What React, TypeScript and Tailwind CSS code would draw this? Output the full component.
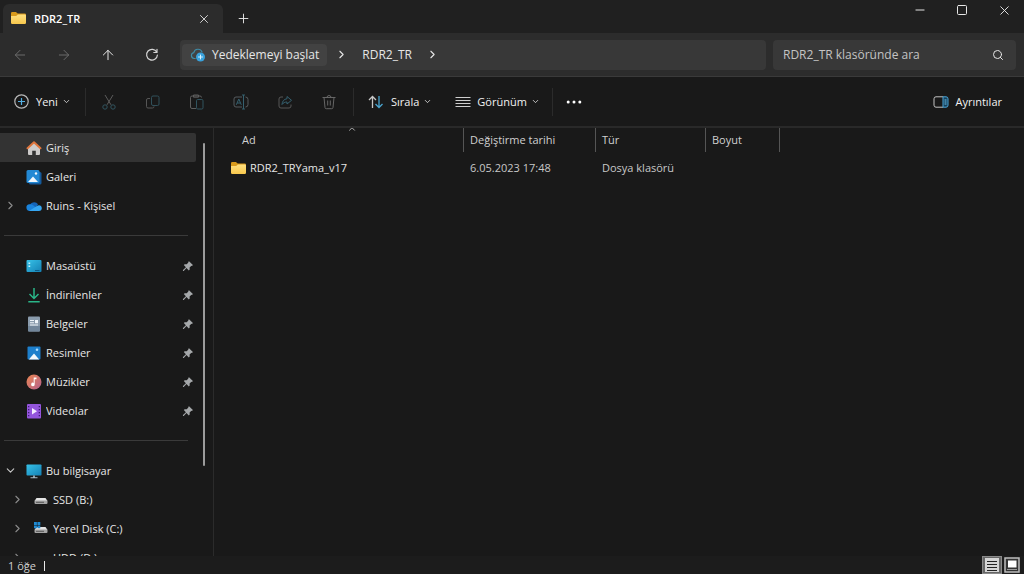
import type { ReactNode } from "react";
import {
  ArrowLeft,
  ArrowRight,
  ArrowUp,
  ChevronDown,
  ChevronRight,
  ChevronUp,
  Minus,
  Plus,
  Search,
  Square,
  X,
} from "lucide-react";

function FolderIcon() {
  return (
    <svg className="h-[15px] w-[15px] shrink-0" viewBox="0 0 15 15" aria-hidden="true">
      <defs>
        <linearGradient id="folder" x1="0" y1="0" x2="0" y2="1">
          <stop offset="0" stopColor="#ffdf80" />
          <stop offset="1" stopColor="#f8c84c" />
        </linearGradient>
      </defs>
      <path d="M0 2.300A1.300 1.300 0 0 1 1.300 1h3.600l1.800 1.500h7A1.300 1.300 0 0 1 15 3.800V8H0z" fill="#d99a1c" />
      <path d="M0 5h5.200l1.700-1.400H14a1 1 0 0 1 1 1v7.200a1.200 1.200 0 0 1-1.200 1.200H1.200A1.200 1.200 0 0 1 0 11.800z" fill="url(#folder)" />
    </svg>
  );
}

function HomeIcon() {
  return (
    <svg className="h-4 w-4" viewBox="0 0 16 16" aria-hidden="true">
      <path d="M2 7.500 8 2.500l6 5V14a1 1 0 0 1-1 1H9.800v-4.200H6.200V15H3a1 1 0 0 1-1-1z" fill="#cdcbca" />
      <path d="M1.500 8.300 8 2.300l6.500 6" fill="none" stroke="#dd743c" strokeWidth="2" strokeLinecap="round" strokeLinejoin="round" />
    </svg>
  );
}

function GalleryIcon() {
  return (
    <svg className="h-4 w-4" viewBox="0 0 16 16" aria-hidden="true">
      <rect x="3" y="3" width="12.500" height="12.500" rx="1.500" fill="#145a9c" />
      <rect x="0.500" y="1" width="13" height="13" rx="1.500" fill="#2389d4" />
      <path d="M2 13 7 7.500l5 5.500z" fill="#f2f8fd" />
      <circle cx="10" cy="4.500" r="1.200" fill="#f2f8fd" />
    </svg>
  );
}

function OneDriveIcon() {
  return (
    <svg className="h-4 w-4" viewBox="0 0 16 16" aria-hidden="true">
      <path d="M3.500 8.500A4.700 4.700 0 0 1 12 6.200L9 11z" fill="#1464b8" />
      <path d="M3.800 13A3.400 3.400 0 0 1 3 6.300c1.500-.4 3 0 4.200.9L13 12.500z" fill="#1a83dc" />
      <path d="M3 13 11.300 7.700A2.900 2.900 0 0 1 15.800 10a3 3 0 0 1-2.900 3z" fill="#35a6f2" />
    </svg>
  );
}

function DesktopIcon() {
  return (
    <svg className="h-4 w-4" viewBox="0 0 16 16" aria-hidden="true">
      <defs>
        <linearGradient id="desktop" x1="0" y1="0" x2="1" y2="1">
          <stop offset="0" stopColor="#37c2e8" />
          <stop offset="1" stopColor="#1480b4" />
        </linearGradient>
      </defs>
      <rect x="0.500" y="2" width="15" height="12" rx="1" fill="url(#desktop)" />
      <path d="M2.500 4.500h1.700v1.500H2.500zM2.500 7.500h1.700V9H2.500z" fill="#c9f4ff" />
      <path d="M9 12h4.500v1H9z" fill="#0d5b86" />
    </svg>
  );
}

function DownloadIcon() {
  return (
    <svg className="h-4 w-4" viewBox="0 0 16 16" fill="none" stroke="#2ab588" strokeWidth="1.500" aria-hidden="true">
      <path d="M8 1v10M3.500 7 8 11.500 12.500 7M2.300 14.700h11.400" />
    </svg>
  );
}

function DocumentIcon() {
  return (
    <svg className="h-4 w-4" viewBox="0 0 16 16" aria-hidden="true">
      <rect x="2" y="0.500" width="12" height="15" rx="1" fill="#8b9cad" />
      <path d="M2 10h12v4.500a1 1 0 0 1-1 1H3a1 1 0 0 1-1-1z" fill="#72869a" />
      <path d="M4 4h4v1H4zM4 6.300h4v1H4zM4 8.600h8v1H4zM9 4h3v3.300H9z" fill="#eef4f9" />
    </svg>
  );
}

function PictureIcon() {
  return (
    <svg className="h-4 w-4" viewBox="0 0 16 16" aria-hidden="true">
      <rect x="1.500" y="1.500" width="13" height="13" rx="1" fill="#1d7fcc" />
      <path d="M2.800 14.500 8 8.500l5.200 6z" fill="#f2f8fd" />
      <circle cx="11" cy="4.800" r="1.300" fill="#a8dcff" />
    </svg>
  );
}

function MusicIcon() {
  return (
    <svg className="h-4 w-4" viewBox="0 0 16 16" aria-hidden="true">
      <defs>
        <linearGradient id="music" x1="0" y1="0" x2="1" y2="1">
          <stop offset="0" stopColor="#ec8752" />
          <stop offset="1" stopColor="#b3608c" />
        </linearGradient>
      </defs>
      <circle cx="8" cy="8" r="7.500" fill="url(#music)" />
      <path d="M7.700 3.500h2.800v1.700H8.700v5.300a1.800 1.800 0 1 1-1-1.600z" fill="#fff" />
    </svg>
  );
}

function VideoIcon() {
  return (
    <svg className="h-4 w-4" viewBox="0 0 16 16" aria-hidden="true">
      <rect x="1" y="1" width="14" height="14.500" rx="1" fill="#9455dc" />
      <path
        d="M2 3h1.300v1.300H2zM2 6h1.300v1.300H2zM2 9h1.300v1.300H2zM2 12h1.300v1.300H2zM12.700 3H14v1.300h-1.300zM12.700 6H14v1.300h-1.300zM12.700 9H14v1.300h-1.300zM12.700 12H14v1.300h-1.300z"
        fill="#3f1c74"
      />
      <path d="M6 5v6.500l5-3.200z" fill="#f5eeff" />
    </svg>
  );
}

function ComputerIcon() {
  return (
    <svg className="h-4 w-4" viewBox="0 0 16 16" aria-hidden="true">
      <rect x="0.500" y="1.500" width="15" height="11" rx="0.800" fill="url(#desktop)" />
      <path d="M7.200 12.500h1.600v2H7.200zM4.500 14.200h7v1h-7z" fill="#a9bcc8" />
    </svg>
  );
}

function DriveIcon({ system = false }: { system?: boolean }) {
  return (
    <svg className="h-4 w-4" viewBox="0 0 16 16" aria-hidden="true">
      <path d="M3.500 6h9l2 3h-13z" fill="#e4e4e4" />
      <rect x="1.500" y="8.500" width="13" height="3.500" rx="1" fill="#a5a5a5" />
      <path d="M3 9.800h8v1H3z" fill="#555" />
      {system && <path d="M1 1h2.900v2.900H1zM4.400 1h2.900v2.900H4.400zM1 4.400h2.900v2.900H1zM4.400 4.400h2.900v2.900H4.400z" fill="#1f8ad2" />}
    </svg>
  );
}

function PinIcon() {
  return (
    <svg className="h-3 w-3 shrink-0" viewBox="0 0 12 12" aria-hidden="true">
      <path d="M7 1.200 10.900 5l-.9.900-.6-.1-1.800 1.800.1 1.900-.9.900-2.300-2.300L1.700 11l-.8-.1L1 10l2.900-2.800-2.100-2.100.9-.9 2 .1 1.700-1.700-.2-.7z" fill="#a5a8aa" />
    </svg>
  );
}

function CloudBackupIcon() {
  return (
    <svg className="h-4 w-4" viewBox="0 0 16 16" fill="none" aria-hidden="true">
      <path d="M5.200 11.500H4A3 3 0 0 1 3.800 5.600 4.300 4.300 0 0 1 12 5" stroke="#3f8ba6" strokeWidth="1.200" strokeLinecap="round" />
      <circle cx="10.500" cy="10" r="4.500" fill="#39a2dc" />
      <path d="M10.500 7.600v4.800M8.100 10h4.800" stroke="#d6f1ff" strokeWidth="1" />
    </svg>
  );
}

function RefreshIcon() {
  return (
    <svg className="h-4 w-4" viewBox="0 0 16 16" fill="none" stroke="#d4d4d4" strokeWidth="1.200" strokeLinecap="round" aria-hidden="true">
      <path d="M12.800 5.200A5.400 5.400 0 1 0 13.400 8M13 2.300v3.200H9.800" />
    </svg>
  );
}

const toolbarActions: { label: string; icon: ReactNode }[] = [
  {
    label: "Kes",
    icon: (
      <>
        <path d="M4 1l6 9.800M12 1 6 10.800" stroke="#5c5c5c" />
        <circle cx="4" cy="13" r="2.200" stroke="#31545f" />
        <circle cx="12" cy="13" r="2.200" stroke="#31545f" />
      </>
    ),
  },
  {
    label: "Kopyala",
    icon: (
      <>
        <path d="M5 4.500H3A1.500 1.500 0 0 0 1.500 6v6.500A1.500 1.500 0 0 0 3 14h4.500A1.500 1.500 0 0 0 9 12.500" stroke="#565656" />
        <rect x="6.500" y="2" width="7.500" height="9.500" rx="1.500" stroke="#31505a" />
      </>
    ),
  },
  {
    label: "Yapıştır",
    icon: (
      <>
        <path d="M7 14.500H3A1.500 1.500 0 0 1 1.500 13V3.500A1.500 1.500 0 0 1 3 2h8a1.500 1.500 0 0 1 1.500 1.500M4.500 1h5v2.200h-5z" stroke="#5e5e5e" />
        <rect x="7.500" y="5.500" width="6.500" height="9.500" rx="1.200" stroke="#31545f" />
      </>
    ),
  },
  {
    label: "Yeniden adlandır",
    icon: (
      <>
        <path d="M9 3H3A2 2 0 0 0 1 5v6a2 2 0 0 0 2 2h6M12.500 3A2.500 2.500 0 0 1 15 5.500v5a2.500 2.500 0 0 1-2.500 2.500" stroke="#555b5e" />
        <path d="M3.300 10.800 5.800 5l2.500 5.800M4.200 9h3.200M10.500 1v14M9 1h3M9 15h3" stroke="#35606f" />
      </>
    ),
  },
  {
    label: "Paylaş",
    icon: (
      <>
        <path d="M6 3H4a2 2 0 0 0-2 2v7a2 2 0 0 0 2 2h8a2 2 0 0 0 2-2v-1.500" stroke="#565656" />
        <path d="M10 2.500 14.500 6.300 10 10V8C7.800 8 6.200 8.800 5 10.500c.2-3.200 2-5.400 5-5.800z" stroke="#35606f" />
      </>
    ),
  },
  {
    label: "Sil",
    icon: <path d="M1.500 3.500h13M6 3.500a2 2 0 0 1 4 0M3 3.500l1 10a1.300 1.300 0 0 0 1.300 1.200h5.400a1.300 1.300 0 0 0 1.300-1.200l1-10M6.700 6.500v5M9.300 6.500v5" stroke="#666" />,
  },
];

const quickLinks = [
  { label: "Masaüstü", icon: <DesktopIcon /> },
  { label: "İndirilenler", icon: <DownloadIcon /> },
  { label: "Belgeler", icon: <DocumentIcon /> },
  { label: "Resimler", icon: <PictureIcon /> },
  { label: "Müzikler", icon: <MusicIcon /> },
  { label: "Videolar", icon: <VideoIcon /> },
];

type SidebarItemProps = {
  label: string;
  icon: ReactNode;
  expand?: "open" | "closed";
  nested?: boolean;
  pinned?: boolean;
  selected?: boolean;
};

function SidebarItem({ label, icon, expand, nested, pinned, selected }: SidebarItemProps) {
  return (
    <li>
      <button
        type="button"
        className={`flex h-[29px] w-full items-center rounded-r-xs pr-0.5 text-left ${nested ? "pl-[11px]" : "pl-1"} ${selected ? "bg-[#333333]" : ""}`}
      >
        <span className="flex w-[22px] items-center text-[#8b8b8b]">
          {expand === "closed" && <ChevronRight size={13} />}
          {expand === "open" && <ChevronDown size={13} className="text-[#c8c8c8]" />}
        </span>
        {icon}
        <span className="ml-1 flex-1 truncate">{label}</span>
        {pinned && <PinIcon />}
      </button>
    </li>
  );
}

function SidebarDivider() {
  return (
    <li className="flex h-[31px] items-center pl-1" role="separator">
      <span className="mr-2 h-px flex-1 bg-[#3a3a3a]" />
    </li>
  );
}

function TitleBar() {
  return (
    <header className="flex h-[33px] shrink-0 items-start bg-[#202020]">
      <div className="mt-1 ml-[3px] flex h-[29px] w-[220px] items-center rounded-t-md bg-[#2c2c2c] pr-3 pl-2">
        <FolderIcon />
        <span className="ml-2 flex-1 text-[11px] font-semibold text-white">RDR2_TR</span>
        <button type="button" aria-label="Sekmeyi kapat">
          <X size={14} strokeWidth={1.5} />
        </button>
      </div>
      <button type="button" aria-label="Yeni sekme" className="mt-1 flex h-[29px] w-10 items-center justify-center">
        <Plus size={15} strokeWidth={1.5} />
      </button>
      <div className="ml-auto flex gap-0.5">
        <button type="button" aria-label="Simge durumuna küçült" className="flex h-5 w-10 items-center justify-center">
          <Minus size={14} strokeWidth={1.7} />
        </button>
        <button type="button" aria-label="Ekranı kapla" className="flex h-5 w-10 items-center justify-center">
          <Square size={12} strokeWidth={2} />
        </button>
        <button type="button" aria-label="Kapat" className="flex h-5 w-10 items-center justify-center">
          <X size={15} strokeWidth={1.5} />
        </button>
      </div>
    </header>
  );
}

function AddressBar() {
  return (
    <div className="flex h-11 shrink-0 items-center border-b border-[#3a3a3a] bg-[#2c2c2c] pr-2 text-[12px]">
      <nav className="flex gap-1" aria-label="Gezinti">
        <button type="button" aria-label="Geri" className="flex h-8 w-10 items-center justify-center text-[#6b6b6b]">
          <ArrowLeft size={16} strokeWidth={1.5} />
        </button>
        <button type="button" aria-label="İleri" className="flex h-8 w-10 items-center justify-center text-[#6b6b6b]">
          <ArrowRight size={16} strokeWidth={1.5} />
        </button>
        <button type="button" aria-label="Yukarı" className="flex h-8 w-10 items-center justify-center">
          <ArrowUp size={16} strokeWidth={1.5} />
        </button>
        <button type="button" aria-label="Yenile" className="flex h-8 w-10 items-center justify-center">
          <RefreshIcon />
        </button>
      </nav>
      <div className="ml-2 flex h-[30px] flex-1 items-center rounded-sm bg-[#383838] pl-0.5">
        <button type="button" className="flex h-[22px] items-center gap-1.5 rounded-sm bg-[#424242] px-2">
          <CloudBackupIcon />
          Yedeklemeyi başlat
        </button>
        <ChevronRight size={13} className="ml-2" />
        <button type="button" className="px-3.5">
          RDR2_TR
        </button>
        <ChevronRight size={13} />
      </div>
      <label className="ml-[7px] flex h-[30px] w-[243px] items-center rounded-sm bg-[#383838] pr-3 pl-2.5">
        <input
          type="search"
          aria-label="Ara"
          placeholder="RDR2_TR klasöründe ara"
          className="min-w-0 flex-1 bg-transparent outline-none placeholder:text-[#c4c4c4]"
        />
        <Search size={12} />
      </label>
    </div>
  );
}

function Toolbar() {
  return (
    <div className="flex h-[51px] shrink-0 items-center border-b-2 border-[#292929] pr-[22px] pl-[14px] font-medium text-[11px] text-[#f2f2f2]" role="toolbar">
      <button type="button" className="flex w-[71px] items-center">
        <svg className="h-[15px] w-[15px]" viewBox="0 0 15 15" fill="none" aria-hidden="true">
          <circle cx="7.500" cy="7.500" r="6.700" stroke="#b9b9b9" strokeWidth="1.200" />
          <path d="M7.500 4v7M4 7.500h7" stroke="#55aee0" strokeWidth="1.200" />
        </svg>
        <span className="mr-1 ml-[7px]">Yeni</span>
        <ChevronDown size={9} />
      </button>
      <span className="mr-px h-7 w-px bg-[#2b2b2b]" />
      {toolbarActions.map((action) => (
        <button key={action.label} type="button" disabled aria-label={action.label} className="flex h-8 w-11 items-center justify-center">
          <svg className="h-4 w-4" viewBox="0 0 16 16" fill="none" aria-hidden="true">
            {action.icon}
          </svg>
        </button>
      ))}
      <span className="ml-0.5 h-7 w-px bg-[#2b2b2b]" />
      <button type="button" className="ml-[14px] flex items-center">
        <svg className="h-4 w-4" viewBox="0 0 16 16" fill="none" strokeWidth="1.300" aria-hidden="true">
          <path d="M4.500 14V2.500M1 6l3.500-3.500L8 6" stroke="#c8c8c8" />
          <path d="M11 2v11.500M7.500 10l3.500 3.500 3.500-3.500" stroke="#4aa5d0" />
        </svg>
        <span className="mr-1 ml-[7px]">Sırala</span>
        <ChevronDown size={9} />
      </button>
      <button type="button" className="ml-[23px] flex items-center">
        <svg className="h-4 w-4" viewBox="0 0 16 16" stroke="#cfcfcf" aria-hidden="true">
          <path d="M.5 3.500h15M.5 6.500h15M.5 9.500h15M.5 12.500h15" />
        </svg>
        <span className="mr-1 ml-1.5">Görünüm</span>
        <ChevronDown size={9} />
      </button>
      <span className="ml-3 h-7 w-px bg-[#2b2b2b]" />
      <button type="button" aria-label="Daha fazla" className="ml-[13px]">
        <svg className="h-4 w-4" viewBox="0 0 16 16" fill="#fff" aria-hidden="true">
          <circle cx="2.200" cy="8" r="1.500" />
          <circle cx="8" cy="8" r="1.500" />
          <circle cx="13.800" cy="8" r="1.500" />
        </svg>
      </button>
      <button type="button" className="ml-auto flex items-center gap-1.5">
        <svg className="h-4 w-4" viewBox="0 0 16 16" fill="none" aria-hidden="true">
          <path d="M10 2.800H3a2 2 0 0 0-2 2v6.400a2 2 0 0 0 2 2h7" stroke="#c4c4c4" />
          <path d="M10 2.800h3a2 2 0 0 1 2 2v6.400a2 2 0 0 1-2 2h-3z" fill="#17405a" stroke="#4aa5d8" />
          <path d="M11.500 6h2M11.500 8h2M11.500 10h2" stroke="#6cc4f0" />
        </svg>
        Ayrıntılar
      </button>
    </div>
  );
}

function Sidebar() {
  return (
    <aside className="flex w-[214px] shrink-0 overflow-hidden border-r border-[#2b2b2b] pt-[5px]">
      <ul className="w-[196px]">
        <SidebarItem label="Giriş" icon={<HomeIcon />} selected />
        <SidebarItem label="Galeri" icon={<GalleryIcon />} />
        <SidebarItem label="Ruins - Kişisel" icon={<OneDriveIcon />} expand="closed" />
        <SidebarDivider />
        {quickLinks.map((link) => (
          <SidebarItem key={link.label} label={link.label} icon={link.icon} pinned />
        ))}
        <SidebarDivider />
        <SidebarItem label="Bu bilgisayar" icon={<ComputerIcon />} expand="open" />
        <SidebarItem label="SSD (B:)" icon={<DriveIcon />} expand="closed" nested />
        <SidebarItem label="Yerel Disk (C:)" icon={<DriveIcon system />} expand="closed" nested />
        <SidebarItem label="HDD (D:)" icon={<DriveIcon />} expand="closed" nested />
      </ul>
      <div className="pt-2.5 pb-[90px] pl-[7px]">
        <div className="h-full w-0.5 rounded-full bg-[#9b9b9b]" />
      </div>
    </aside>
  );
}

function FileList() {
  return (
    <main className="min-w-0 flex-1 overflow-hidden pl-4">
      <table className="w-[550px] table-fixed border-separate border-spacing-0 text-left">
        <colgroup>
          <col className="w-[234px]" />
          <col className="w-[132px]" />
          <col className="w-[110px]" />
          <col className="w-[74px]" />
        </colgroup>
        <thead className="text-[#d0d0d0]">
          <tr>
            <th className="relative h-6 border-r border-[#555] pl-3 font-normal">
              Ad
              <ChevronUp size={10} className="absolute -top-1 left-1/2" />
            </th>
            <th className="border-r border-[#555] pl-1.5 font-normal">Değiştirme tarihi</th>
            <th className="border-r border-[#555] pl-1.5 font-normal">Tür</th>
            <th className="border-r border-[#555] pl-1.5 font-normal">Boyut</th>
          </tr>
        </thead>
        <tbody>
          <tr>
            <td className="h-8 pl-px">
              <span className="flex items-center gap-1">
                <FolderIcon />
                RDR2_TRYama_v17
              </span>
            </td>
            <td className="pl-1.5 text-[#c8c8c8]">6.05.2023 17:48</td>
            <td className="pl-1.5 text-[#c8c8c8]">Dosya klasörü</td>
            <td />
          </tr>
        </tbody>
      </table>
    </main>
  );
}

function StatusBar() {
  return (
    <footer className="flex h-[18px] shrink-0 items-end bg-[#1c1c1c] pr-1 pl-2 text-[#d0d0d0]">
      <span>1 öğe</span>
      <span className="mb-[3px] ml-2 h-2.5 w-px bg-[#e8e8e8]" />
      <div className="ml-auto flex gap-0.5">
        <button type="button" aria-label="Ayrıntılar görünümü" aria-pressed="true" className="flex h-[18px] w-5 items-center justify-center border border-[#8a8a8a] bg-[#666]">
          <svg className="h-3.5 w-3.5" viewBox="0 0 14 14" aria-hidden="true">
            <path d="M0 0h14v14H0z" fill="#d5d5d5" />
            <path d="M2 3.500h10M2 6.500h10M2 9.500h10M2 12.500h10" stroke="#222" />
          </svg>
        </button>
        <button type="button" aria-label="Büyük simgeler" className="flex h-[18px] w-4 items-center justify-center">
          <svg className="h-4 w-4" viewBox="0 0 16 16" aria-hidden="true">
            <path d="M1 1h14v14H1z" fill="#333" stroke="#bdbdbd" strokeWidth="1.500" />
            <path d="M4 3.500h8.500v7H4z" fill="#fff" />
            <path d="M3 12.500h10" stroke="#999" />
          </svg>
        </button>
      </div>
    </footer>
  );
}

export default function App() {
  return (
    <div className="flex h-screen flex-col overflow-hidden bg-[#191919] font-['Open_Sans','Noto_Sans',sans-serif] text-[11px] leading-4 text-[#e6e6e6]">
      <TitleBar />
      <AddressBar />
      <Toolbar />
      <div className="flex min-h-0 flex-1">
        <Sidebar />
        <FileList />
      </div>
      <StatusBar />
    </div>
  );
}
